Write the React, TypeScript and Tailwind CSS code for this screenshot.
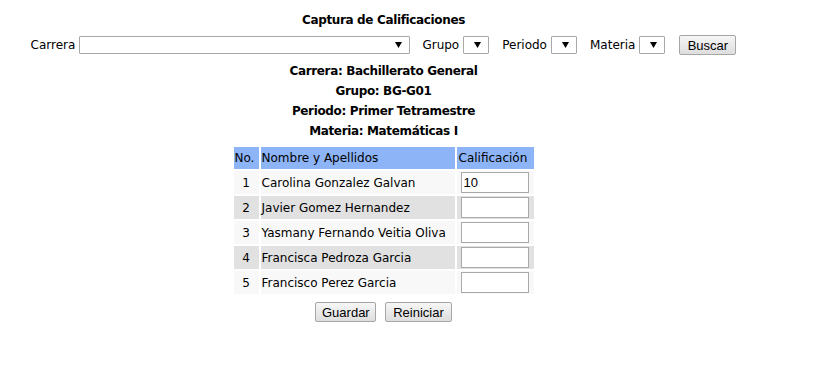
import React from "react";

const Arrow = () => (
  <svg width="7" height="6" viewBox="0 0 7 6" className="absolute right-[8px] top-[6px] pointer-events-none">
    <path d="M0 0 L7 0 L3.5 6 Z" fill="#000" />
  </svg>
);

function FakeSelect({ w }: { w: string }) {
  return (
    <div className={`relative ${w} h-[18px]`}>
      <select className="appearance-none w-full h-full bg-white border border-[#a9a9a9] rounded-[1px] outline-none" />
      <Arrow />
    </div>
  );
}

const students = [
  "Carolina Gonzalez Galvan",
  "Javier Gomez Hernandez",
  "Yasmany Fernando Veitia Oliva",
  "Francisca Pedroza Garcia",
  "Francisco Perez Garcia",
];

const btn =
  "h-[20px] px-[6px] border border-[#a6a6a6] rounded-[2px] bg-gradient-to-b from-[#f6f6f6] to-[#dedede] text-[13px] text-black leading-none";

export default function App() {
  return (
    <div className="w-[818px] h-[375px] bg-white text-black font-['DejaVu_Sans',sans-serif] text-[12px]">
      <div className="w-[767px] flex flex-col items-center">
        <div className="mt-[10px] h-[20px] leading-[20px] font-bold tracking-[-0.35px]">Captura de Calificaciones</div>
        <div className="mt-[5px] flex items-center h-[20px]">
          <span className="mr-[4px]">Carrera</span>
          <FakeSelect w="w-[331px]" />
          <span className="ml-[12px] mr-[4px]">Grupo</span>
          <FakeSelect w="w-[26px]" />
          <span className="ml-[13px] mr-[4px]">Periodo</span>
          <FakeSelect w="w-[26px]" />
          <span className="ml-[13px] mr-[4px]">Materia</span>
          <FakeSelect w="w-[26px]" />
          <button className={`${btn} ml-[14px] font-['Liberation_Sans',sans-serif] w-[57px]`}>Buscar</button>
        </div>
        <div className="mt-[6px] font-bold leading-[20px] text-center tracking-[-0.35px]">
          <div>Carrera: Bachillerato General</div>
          <div>Grupo: BG-G01</div>
          <div>Periodo: Primer Tetramestre</div>
          <div>Materia: Matemáticas I</div>
        </div>
        <table className="mt-[4px] border-separate border-spacing-[2px]">
          <thead>
            <tr className="h-[22px]">
              <th className="w-[25px] bg-[#8db4f7] font-normal text-left px-[1px]">No.</th>
              <th className="w-[194px] bg-[#8db4f7] font-normal text-left px-[1px]">Nombre y Apellidos</th>
              <th className="w-[77px] bg-[#8db4f7] font-normal text-left px-[2px]">Calificación</th>
            </tr>
          </thead>
          <tbody>
            {students.map((s, i) => {
              const bg = i % 2 === 0 ? "bg-[#f8f8f8]" : "bg-[#e1e1e1]";
              return (
                <tr key={s} className="h-[23px]">
                  <td className={`${bg} text-center`}>{i + 1}</td>
                  <td className={`${bg} px-[1px] whitespace-nowrap`}>{s}</td>
                  <td className={`${bg} px-[4px]`}>
                    <input
                      defaultValue={i === 0 ? "10" : ""}
                      className="block w-[68px] h-[21px] bg-white border border-[#a9a9a9] px-[2px] font-['Liberation_Sans',sans-serif] text-[13px] outline-none"
                    />
                  </td>
                </tr>
              );
            })}
          </tbody>
        </table>
        <div className="mt-[6px] flex gap-[9px] font-['Liberation_Sans',sans-serif]">
          <button className={`${btn} w-[61px]`}>Guardar</button>
          <button className={`${btn} w-[67px]`}>Reiniciar</button>
        </div>
      </div>
    </div>
  );
}
